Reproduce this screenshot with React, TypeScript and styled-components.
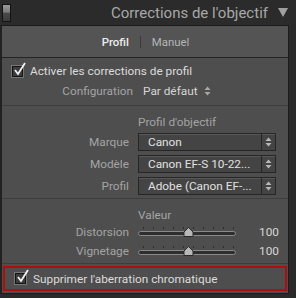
import React from 'react'
import styled, { createGlobalStyle } from 'styled-components'

const GlobalStyle = createGlobalStyle`
  html, body {
    margin: 0;
    padding: 0;
    background: #2a2a2a;
  }
  body {
    font-family: Roboto, "Liberation Sans", sans-serif;
    width: 296px;
    height: 298px;
    overflow: hidden;
  }
`

const Header = styled.div`
  height: 25px;
  display: flex;
  align-items: center;
  padding: 0 8px 0 2px;
  background: #2b2b2b;
`

const Switch = styled.div`
  width: 7px;
  height: 16px;
  border: 1px solid #141414;
  background: linear-gradient(#9a9a9a 0%, #7a7a7a 45%, #4a4a4a 50%, #3c3c3c 100%);
`

const Title = styled.div`
  flex: 1;
  text-align: right;
  font-size: 15px;
  color: #a8a8a8;
  padding-right: 10px;
`

const Panel = styled.div`
  width: 286px;
  border: 1px solid #1c1c1c;
  border-left: 2px solid #222;
  background: #4e4e4e;
  height: 267px;
`

const Tabs = styled.div`
  height: 31px;
  display: flex;
  align-items: center;
  justify-content: center;
  gap: 11px;
  background: #545454;
  border-bottom: 1px solid #242424;
  font-size: 11.4px;
  padding-left: 1px;
`

const Tab = styled.span<{ $active?: boolean }>`
  color: ${p => (p.$active ? '#ececec' : '#b4b4b4')};
  font-weight: ${p => (p.$active ? 500 : 400)};
`

const TabSep = styled.span`
  width: 1px;
  height: 12px;
  background: #3a3a3a;
`

const Section = styled.div<{ $pad: string }>`
  padding: ${p => p.$pad};
  border-bottom: 1px solid #3e3e3e;
`

const CheckRow = styled.label`
  display: flex;
  align-items: center;
  gap: 7px;
  height: 24px;
  padding-left: 10px;
  font-size: 11.8px;
  color: #dcdcdc;
`

const Box = styled.span`
  position: relative;
  width: 9px;
  height: 9px;
  border: 1px solid #141414;
  background: #3c3c3c;
  box-shadow: 0 0 0 1px #777;
  svg {
    position: absolute;
    left: 0;
    top: -5px;
  }
`

const Grid = styled.div<{ $label: number; $gap: number; $row: number; $head?: number }>`
  display: grid;
  grid-template-columns: ${p => p.$label}px 1fr;
  ${p => (p.$head ? `grid-template-rows: ${p.$head}px;` : '')}
  column-gap: ${p => p.$gap}px;
  grid-auto-rows: ${p => p.$row}px;
  align-items: center;
  font-size: 11.8px;
`

const Label = styled.span`
  text-align: right;
  color: #a4a4a4;
`

const Value = styled.span`
  display: flex;
  align-items: center;
  gap: 6px;
  color: #d6d6d6;
`

const Heading = styled.span`
  grid-column: 2;
  color: #a4a4a4;
`

const Select = styled.div`
  width: 138px;
  height: 18px;
  box-sizing: border-box;
  display: flex;
  border: 1px solid #262626;
  background: #444;
  box-shadow: inset 0 1px 0 #585858;
`

const SelectText = styled.span`
  flex: 1;
  padding-left: 9px;
  line-height: 16px;
  color: #e0e0e0;
  white-space: nowrap;
  overflow: hidden;
`

const SelectArrow = styled.span`
  width: 13px;
  border-left: 1px solid #262626;
  display: flex;
  align-items: center;
  justify-content: center;
`

const SliderRow = styled.div`
  display: flex;
  align-items: center;
  justify-content: space-between;
  padding-right: 9px;
`

const Track = styled.div`
  position: relative;
  width: 98px;
  height: 16px;
`

const Bar = styled.div`
  position: absolute;
  left: 0;
  right: 0;
  top: 7px;
  height: 3px;
  border-radius: 3px;
  background: #2e2e2e;
  border: 1px solid #8a8a8a;
`

const Tick = styled.div`
  position: absolute;
  top: 3px;
  width: 1px;
  height: 2px;
  background: #2e2e2e;
`

const Thumb = styled.svg`
  position: absolute;
  top: 3px;
`

const Num = styled.span`
  color: #d6d6d6;
`

const Highlight = styled.div`
  margin: 2px 1px 0 1px;
  border: 2px solid #b00d0d;
  height: 21px;
  display: flex;
  align-items: center;
`

function Check() {
  return (
    <Box>
      <svg width="14" height="14" viewBox="0 0 14 14">
        <path d="M2 8 L5 12 L12 1" fill="none" stroke="#f2f2f2" strokeWidth="1.8" />
      </svg>
    </Box>
  )
}

function Arrows({ color = '#b8b8b8' }: { color?: string }) {
  return (
    <svg width="7" height="10" viewBox="0 0 7 10">
      <path d="M0.5 4 L3.5 0.5 L6.5 4 Z M0.5 6 L3.5 9.5 L6.5 6 Z" fill={color} />
    </svg>
  )
}

function Slider({ pos }: { pos: number }) {
  const ticks = [5, 15, 25, 35, 45, 55, 65, 75, 85, 95]
  return (
    <Track>
      {ticks.map(t => (
        <Tick key={t} style={{ left: t }} />
      ))}
      <Bar />
      <Thumb width="11" height="10" viewBox="0 0 11 10" style={{ left: pos - 5 }}>
        <path d="M5.5 0.5 L10 5 L10 9.5 L1 9.5 L1 5 Z" fill="#b8b8b8" stroke="#2a2a2a" strokeWidth="1" />
      </Thumb>
    </Track>
  )
}

export default function App() {
  return (
    <>
      <GlobalStyle />
      <Header>
        <Switch />
        <Title>Corrections de l'objectif</Title>
        <svg width="10" height="9" viewBox="0 0 10 9">
          <path d="M0 0 L10 0 L5 9 Z" fill="#a0a0a0" />
        </svg>
      </Header>
      <Panel>
        <Tabs>
          <Tab $active>Profil</Tab>
          <TabSep />
          <Tab>Manuel</Tab>
        </Tabs>
        <Section $pad="1px 0 6px">
          <CheckRow>
            <Check />
            Activer les corrections de profil
          </CheckRow>
          <Grid $label={131} $gap={10} $row={16}>
            <Label>Configuration</Label>
            <Value>
              Par défaut <Arrows color="#a8a8a8" />
            </Value>
          </Grid>
        </Section>
        <Section $pad="7px 0 1px">
          <Grid $label={127} $gap={9} $row={22} $head={18}>
            <Heading>Profil d'objectif</Heading>
            <Label>Marque</Label>
            <Select>
              <SelectText>Canon</SelectText>
              <SelectArrow><Arrows /></SelectArrow>
            </Select>
            <Label>Modèle</Label>
            <Select>
              <SelectText>Canon EF-S 10-22...</SelectText>
              <SelectArrow><Arrows /></SelectArrow>
            </Select>
            <Label>Profil</Label>
            <Select>
              <SelectText>Adobe (Canon EF-...</SelectText>
              <SelectArrow><Arrows /></SelectArrow>
            </Select>
          </Grid>
        </Section>
        <Section $pad="8px 0 3px">
          <Grid $label={127} $gap={9} $row={19} $head={15}>
            <Heading>Valeur</Heading>
            <Label>Distorsion</Label>
            <SliderRow>
              <Slider pos={50} />
              <Num>100</Num>
            </SliderRow>
            <Label>Vignetage</Label>
            <SliderRow>
              <Slider pos={50} />
              <Num>100</Num>
            </SliderRow>
          </Grid>
        </Section>
        <Highlight>
          <CheckRow>
            <Check />
            Supprimer l'aberration chromatique
          </CheckRow>
        </Highlight>
      </Panel>
    </>
  )
}
